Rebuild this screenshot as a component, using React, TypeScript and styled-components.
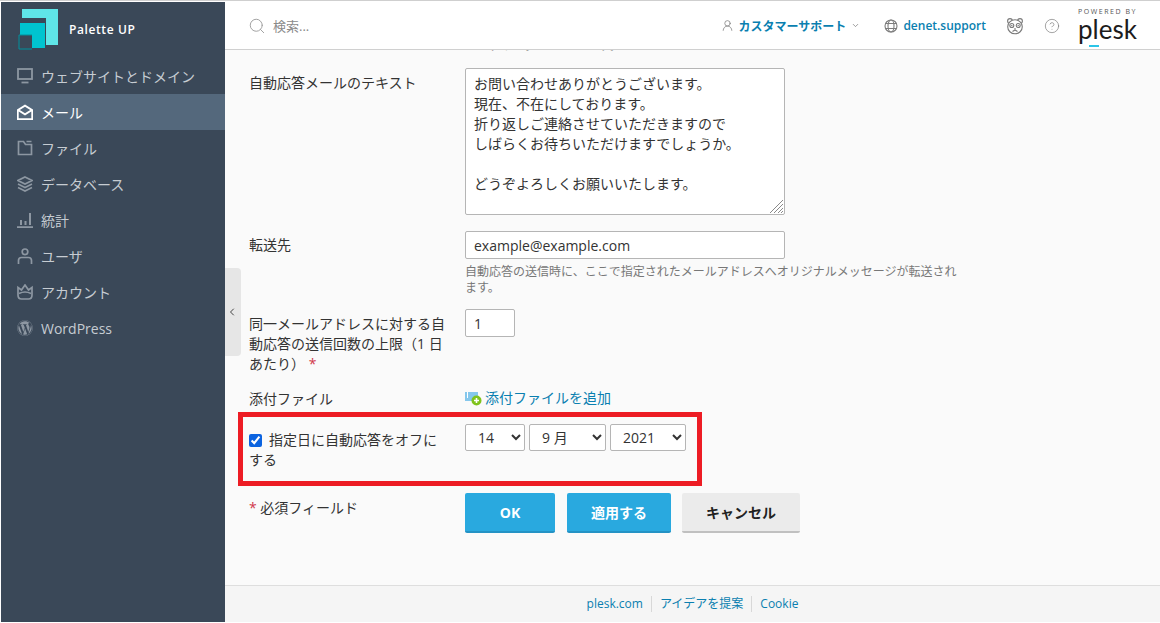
import React from "react";
import styled, { createGlobalStyle } from "styled-components";
import { ChevronDown, ChevronLeft, CircleHelp, Search, UserRound } from "lucide-react";
import { FaWordpress } from "react-icons/fa";

const FONT = `"Open Sans", "Noto Sans CJK JP", sans-serif`;

const GlobalStyle = createGlobalStyle`
  html, body {
    margin: 0;
    padding: 0;
    background: #fff;
  }
  * {
    box-sizing: border-box;
  }
`;

const Page = styled.div`
  position: relative;
  width: 1160px;
  height: 623px;
  overflow: hidden;
  display: flex;
  padding: 1px 0 1px 1px;
  background: #fff;
  border-top: 1px solid #cfcfcf;
  font-family: ${FONT};
  font-size: 14px;
  color: #333;
`;

const Sidebar = styled.nav`
  width: 224px;
  flex: none;
  background: #3a4858;
  display: flex;
  flex-direction: column;
`;

const Brand = styled.div`
  height: 56px;
  display: flex;
  align-items: center;
  gap: 9px;
  padding: 0 0 2px 17px;
  color: #fff;
  font-size: 12px;
  font-weight: 600;
  letter-spacing: 0.6px;
`;

const NavItem = styled.div<{ $active?: boolean }>`
  height: 36px;
  display: flex;
  align-items: center;
  gap: 8px;
  padding-left: 16px;
  font-size: 14px;
  color: ${(p) => (p.$active ? "#fff" : "#c6ccd2")};
  background: ${(p) => (p.$active ? "#54687c" : "transparent")};
  svg {
    width: 16px;
    height: 16px;
    flex: none;
    color: ${(p) => (p.$active ? "#fff" : "#8d97a2")};
  }
`;

const Main = styled.div`
  flex: 1;
  min-width: 0;
  display: flex;
  flex-direction: column;
  background: #fafafa;
`;

const Header = styled.header`
  height: 48px;
  flex: none;
  display: flex;
  align-items: center;
  padding: 0 24px 0 23px;
  background: #fff;
  border-bottom: 1px solid #d0d0d0;
`;

const SearchBox = styled.div`
  flex: 1;
  display: flex;
  align-items: center;
  gap: 7px;
  color: #8a8a8a;
  font-size: 13px;
  svg {
    color: #999;
  }
`;

const HeaderLink = styled.a<{ $gap: number }>`
  display: flex;
  align-items: center;
  gap: 5px;
  color: #0a7fb0;
  font-size: 12px;
  font-weight: 600;
  margin-right: ${(p) => p.$gap}px;
  svg {
    color: #7d7d7d;
    flex: none;
  }
`;

const HeaderIcon = styled.span<{ $gap: number }>`
  display: flex;
  margin-right: ${(p) => p.$gap}px;
  color: #777;
`;

const PleskLogo = styled.div`
  position: relative;
  width: 58px;
  color: #1c1c1c;
  margin-top: -2px;
`;

const PoweredBy = styled.div`
  font-size: 7px;
  line-height: 8px;
  letter-spacing: 1.55px;
  white-space: nowrap;
  color: #555;
`;

const PleskWord = styled.div`
  font-family: Lato, sans-serif;
  font-weight: 400;
  font-size: 26px;
  line-height: 26px;
`;

const PleskMark = styled.span`
  position: absolute;
  left: 11px;
  bottom: -5px;
  width: 10px;
  height: 2px;
  background: #2cc5e8;
`;

const Content = styled.main`
  flex: 1;
  min-height: 0;
  overflow: hidden;
  padding-left: 24px;
`;

const ClippedHint = styled.div`
  height: 4px;
  margin-left: 216px;
  margin-bottom: 14px;
  display: flex;
  align-items: flex-end;
  overflow: hidden;
  font-size: 12px;
  line-height: 16px;
  color: #777;
`;

const Row = styled.div<{ $gap?: number }>`
  display: grid;
  grid-template-columns: 216px 1fr;
  margin-bottom: ${(p) => p.$gap ?? 0}px;
`;

const Label = styled.label<{ $top?: number }>`
  display: block;
  width: 200px;
  padding-top: ${(p) => p.$top ?? 0}px;
  line-height: 20px;
  color: #333;
`;

const Required = styled.span`
  color: #d0384b;
`;

const TextAreaWrap = styled.div`
  position: relative;
  width: 320px;
  height: 147px;
`;

const TextArea = styled.textarea`
  display: block;
  width: 100%;
  height: 100%;
  padding: 5px 8px;
  border: 1px solid #b5b5b5;
  border-radius: 2px;
  font-family: ${FONT};
  font-size: 14px;
  line-height: 20px;
  color: #333;
  background: #fff;
  outline: none;
  resize: none;
`;

const ResizeGrip = styled.svg`
  position: absolute;
  right: 1px;
  bottom: 1px;
  width: 15px;
  height: 15px;
`;

const TextInput = styled.input<{ $width: number }>`
  display: block;
  width: ${(p) => p.$width}px;
  height: 28px;
  padding: 0 8px;
  border: 1px solid #b5b5b5;
  border-radius: 2px;
  font-family: ${FONT};
  font-size: 14px;
  color: #333;
  background: #fff;
  outline: none;
`;

const Hint = styled.div`
  width: 500px;
  margin-top: 5px;
  font-size: 12px;
  line-height: 16px;
  color: #777;
`;

const AddLink = styled.a`
  display: flex;
  align-items: center;
  gap: 3px;
  height: 20px;
  margin-top: -1px;
  color: #0a7fb0;
  line-height: 20px;
`;

const CheckLabel = styled.label`
  display: block;
  width: 195px;
  padding-top: 6px;
  line-height: 20px;
  input {
    width: 13px;
    height: 13px;
    margin: 0 7px 0 0;
    vertical-align: -2px;
    accent-color: #0b63e0;
  }
`;

const Selects = styled.div`
  display: flex;
  gap: 4px;
`;

const Select = styled.select<{ $width: number }>`
  width: ${(p) => p.$width}px;
  height: 27px;
  padding: 0 0 0 8px;
  border: 1px solid #b5b5b5;
  border-radius: 2px;
  font-family: ${FONT};
  font-size: 14px;
  color: #333;
  background: #fff;
  outline: none;
`;

const Buttons = styled.div`
  display: flex;
  gap: 12px;
`;

const Button = styled.button<{ $width: number; $primary?: boolean }>`
  width: ${(p) => p.$width}px;
  height: 40px;
  padding: 0;
  border: 0;
  border-bottom: 2px solid ${(p) => (p.$primary ? "#2492c4" : "#c0c0c0")};
  border-radius: 2px;
  font-family: ${FONT};
  font-size: 14px;
  font-weight: 700;
  color: ${(p) => (p.$primary ? "#fff" : "#222")};
  background: ${(p) => (p.$primary ? "#29a9df" : "#ebebeb")};
  & + & + & {
    margin-left: -1px;
  }
`;

const Footer = styled.footer`
  height: 37px;
  flex: none;
  display: flex;
  justify-content: center;
  align-items: center;
  background: #f5f5f5;
  border-top: 1px solid #dedede;
  font-size: 12px;
  a {
    color: #0a7fb0;
    padding: 0 8px;
    line-height: 16px;
  }
  a + a {
    border-left: 1px solid #d8d8d8;
  }
`;

const CollapseHandle = styled.div`
  position: absolute;
  left: 225px;
  top: 267px;
  width: 16px;
  height: 88px;
  display: flex;
  align-items: center;
  justify-content: center;
  padding: 0 2px 1px 0;
  background: #e6e6e6;
  border-radius: 0 4px 4px 0;
  color: #444;
`;

const Annotation = styled.div`
  position: absolute;
  left: 238px;
  top: 411px;
  width: 464px;
  height: 74px;
  border: 5px solid #ed1c24;
  pointer-events: none;
`;

const Logo = () => (
  <svg width="42" height="42" viewBox="0 0 42 42" fill="none" style={{ flex: "none" }}>
    <path d="M4 1h36v36h-12V10H4z" fill="#5fe6e8" />
    <path d="M2 15h25v25H14V27H2z" fill="#00c4d0" />
    <path d="M14 27H1v14h13" stroke="#00909c" strokeWidth="1" />
  </svg>
);

const MonitorIcon = () => (
  <svg viewBox="0 0 16 16" fill="none" stroke="currentColor" strokeWidth="1.8">
    <rect x="1" y="1" width="14" height="10" />
    <path d="M4.500 14.500h7" />
  </svg>
);

const MailIcon = () => (
  <svg viewBox="0 0 16 16" fill="currentColor">
    <path d="M8 0.500 16 5.500V16H0V5.500zM8 2.700 2.800 6 8 9.200 13.200 6zM1.700 7.600v6.700h12.600V7.600L8 11.400z" fillRule="evenodd" />
  </svg>
);

const FolderIcon = () => (
  <svg viewBox="0 0 16 16" fill="none" stroke="currentColor" strokeWidth="1.7">
    <path d="M1.500 1.500h5l2 3h6v10h-13zM9.500 1.500h5" />
  </svg>
);

const LayersIcon = () => (
  <svg viewBox="0 0 16 16" fill="none" stroke="currentColor" strokeWidth="1.6">
    <path d="M8 1 15 4.500 8 8 1 4.500zM1 8l7 3.500L15 8M1 11.500l7 3.500 7-3.500" />
  </svg>
);

const ChartIcon = () => (
  <svg viewBox="0 0 16 16" fill="currentColor">
    <path d="M0 14.300h16V16H0zM3 8h2v5H3zM7.500 9h2v4h-2zM12 1h2v12h-2z" />
  </svg>
);

const UserIcon = () => (
  <svg viewBox="0 0 16 16" fill="none" stroke="currentColor" strokeWidth="1.7">
    <circle cx="8" cy="3.800" r="2.800" />
    <path d="M1.500 16v-3.500c0-2 1.500-3 3-3h7c1.500 0 3 1 3 3V16" />
  </svg>
);

const CrownIcon = () => (
  <svg viewBox="0 0 16 16" fill="none" stroke="currentColor" strokeWidth="1.7">
    <path d="M1 3.500 4.500 6 8 1l3.500 5L15 3.500V11c0 2.500-1.500 4-3.500 4h-7C2.500 15 1 13.500 1 11z" />
    <path d="M2 9.500c4-2 8-2 12 0" />
  </svg>
);

const GlobeIcon = () => (
  <svg width="14" height="14" viewBox="0 0 14 14" fill="none" stroke="currentColor" strokeWidth="1.100">
    <circle cx="7" cy="7" r="6" />
    <ellipse cx="7" cy="7" rx="3" ry="6" />
    <path d="M1.500 4.500h11M1.500 9.500h11" />
  </svg>
);

const PandaIcon = () => (
  <svg width="18" height="18" viewBox="0 0 18 18" fill="none" stroke="#7a7a7a" strokeWidth="1.100">
    <circle cx="4" cy="4" r="2.400" />
    <circle cx="14" cy="4" r="2.400" />
    <ellipse cx="9" cy="9.800" rx="7.300" ry="7" fill="#fff" />
    <circle cx="5.800" cy="8.500" r="2" />
    <circle cx="12.200" cy="8.500" r="2" />
    <circle cx="5.800" cy="8.500" r="0.700" fill="#7a7a7a" stroke="none" />
    <circle cx="12.200" cy="8.500" r="0.700" fill="#7a7a7a" stroke="none" />
    <path d="M9 11v2.200M6.500 14.500 9 13l2.500 1.500" />
  </svg>
);

const AttachIcon = () => (
  <svg width="17" height="15" viewBox="0 0 17 15">
    <rect x="0" y="1" width="13" height="9" fill="#85c7ec" />
    <rect x="2" y="1" width="1" height="6" fill="#fff" />
    <circle cx="11.500" cy="9.500" r="5" fill="#7fc31c" />
    <path d="M9 9.500h5M11.500 7v5" stroke="#fff" strokeWidth="1.600" />
  </svg>
);

const navItems = [
  { label: "ウェブサイトとドメイン", icon: <MonitorIcon /> },
  { label: "メール", icon: <MailIcon />, active: true },
  { label: "ファイル", icon: <FolderIcon /> },
  { label: "データベース", icon: <LayersIcon /> },
  { label: "統計", icon: <ChartIcon /> },
  { label: "ユーザ", icon: <UserIcon /> },
  { label: "アカウント", icon: <CrownIcon /> },
  { label: "WordPress", icon: <FaWordpress /> },
];

const replyText = `お問い合わせありがとうございます。
現在、不在にしております。
折り返しご連絡させていただきますので
しばらくお待ちいただけますでしょうか。

どうぞよろしくお願いいたします。`;

export default function App() {
  return (
    <Page>
      <GlobalStyle />
      <Sidebar>
        <Brand>
          <Logo />
          Palette UP
        </Brand>
        {navItems.map((item) => (
          <NavItem key={item.label} $active={item.active}>
            {item.icon}
            {item.label}
          </NavItem>
        ))}
      </Sidebar>
      <Main>
        <Header>
          <SearchBox>
            <Search size={18} strokeWidth={1.2} />
            検索...
          </SearchBox>
          <HeaderLink $gap={24}>
            <UserRound size={13} strokeWidth={1.4} />
            カスタマーサポート
            <ChevronDown size={9} />
          </HeaderLink>
          <HeaderLink $gap={20}>
            <GlobeIcon />
            denet.support
          </HeaderLink>
          <HeaderIcon $gap={20}>
            <PandaIcon />
          </HeaderIcon>
          <HeaderIcon $gap={18}>
            <CircleHelp size={16} strokeWidth={1} />
          </HeaderIcon>
          <PleskLogo>
            <PoweredBy>POWERED BY</PoweredBy>
            <PleskWord>plesk</PleskWord>
            <PleskMark />
          </PleskLogo>
        </Header>
        <Content>
          <ClippedHint>コーディングは UTF-8 です。</ClippedHint>
          <Row $gap={16}>
            <Label $top={5}>自動応答メールのテキスト</Label>
            <TextAreaWrap>
              <TextArea defaultValue={replyText} />
              <ResizeGrip viewBox="0 0 15 15" stroke="#8a8a8a" strokeWidth="1">
                <path d="M14 1 1 14M14 5 5 14M14 9 9 14M14 12l-2 2" />
              </ResizeGrip>
            </TextAreaWrap>
          </Row>
          <Row $gap={13}>
            <Label $top={4}>転送先</Label>
            <div>
              <TextInput $width={320} defaultValue="example@example.com" />
              <Hint>
                自動応答の送信時に、ここで指定されたメールアドレスへオリジナルメッセージが転送されます。
              </Hint>
            </div>
          </Row>
          <Row $gap={15}>
            <Label $top={5}>
              同一メールアドレスに対する自動応答の送信回数の上限（1 日あたり） <Required>*</Required>
            </Label>
            <TextInput $width={50} defaultValue="1" />
          </Row>
          <Row $gap={15}>
            <Label>添付ファイル</Label>
            <AddLink>
              <AttachIcon />
              添付ファイルを追加
            </AddLink>
          </Row>
          <Row $gap={23}>
            <CheckLabel>
              <input type="checkbox" defaultChecked />
              指定日に自動応答をオフにする
            </CheckLabel>
            <Selects>
              <Select $width={60} defaultValue="14">
                <option>14</option>
              </Select>
              <Select $width={77} defaultValue="9 月">
                <option>9 月</option>
              </Select>
              <Select $width={76} defaultValue="2021">
                <option>2021</option>
              </Select>
            </Selects>
          </Row>
          <Row>
            <Label $top={5}>
              <Required>*</Required> 必須フィールド
            </Label>
            <Buttons>
              <Button $width={90} $primary>
                OK
              </Button>
              <Button $width={104} $primary>
                適用する
              </Button>
              <Button $width={118}>キャンセル</Button>
            </Buttons>
          </Row>
        </Content>
        <Footer>
          <a>plesk.com</a>
          <a>アイデアを提案</a>
          <a>Cookie</a>
        </Footer>
      </Main>
      <CollapseHandle>
        <ChevronLeft size={12} />
      </CollapseHandle>
      <Annotation />
    </Page>
  );
}
